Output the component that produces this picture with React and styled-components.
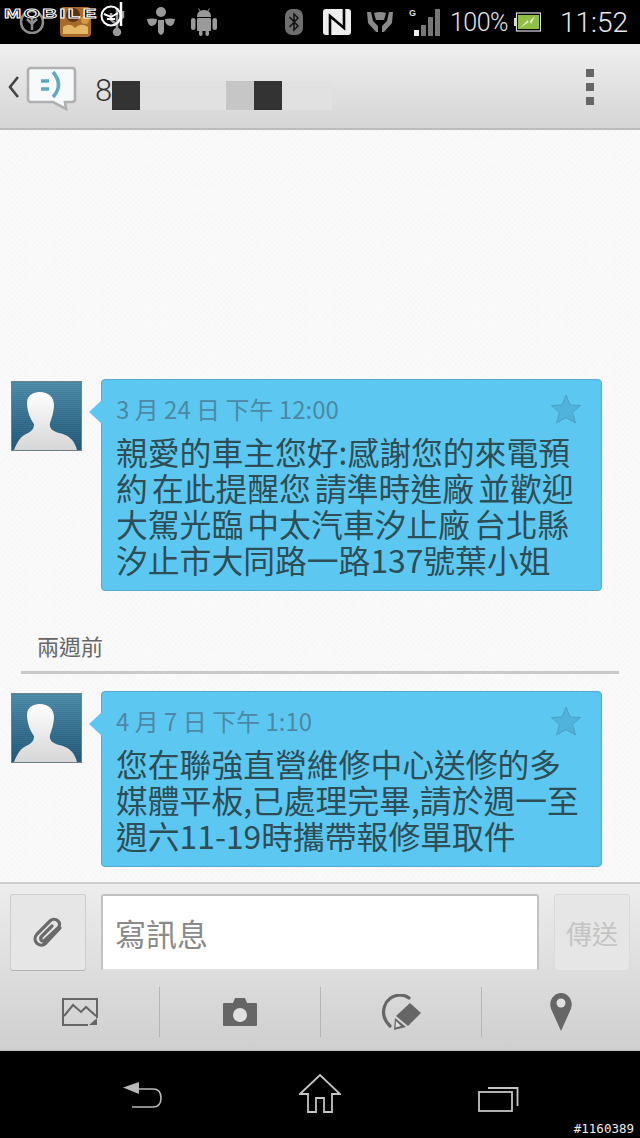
import React from 'react'
import styled, { createGlobalStyle } from 'styled-components'

const CJK = `"Noto Sans CJK TC", "Noto Sans", sans-serif`

const Global = createGlobalStyle`
  html, body { margin: 0; padding: 0; background: #000; }
`

const Phone = styled.div`
  position: relative;
  width: 640px;
  height: 1138px;
  display: flex;
  flex-direction: column;
  overflow: hidden;
  font-family: ${CJK};
`

const StatusBar = styled.div`
  height: 44px;
  flex: none;
  background: #000;
  display: flex;
  align-items: center;
`
const Slot = styled.div`
  flex: none;
  width: ${p => p.$w}px;
  height: 30px;
  margin-left: ${p => p.$ml}px;
  display: flex;
  align-items: center;
  justify-content: center;
`
const Percent = styled.span`
  flex: none;
  margin-left: 9px;
  width: 56px;
  font: 300 25px "Roboto", sans-serif;
  letter-spacing: -0.5px;
  color: #e4e4e4;
  white-space: nowrap;
`
const Clock = styled.span`
  flex: none;
  margin-left: 19px;
  font: 300 28px "Roboto", sans-serif;
  color: #e8e8e8;
`
const Watermark = styled.div`
  position: absolute;
  left: 4px;
  top: 1px;
  display: flex;
  align-items: center;
`
const WatermarkText = styled.span`
  width: 57px;
  margin-right: 38px;
  font: 700 12.5px "Liberation Sans", sans-serif;
  letter-spacing: 1.5px;
  color: #000;
  -webkit-text-stroke: 0.8px #fff;
  transform: scaleX(1.65);
  transform-origin: left center;
`

const Header = styled.header`
  height: 86px;
  flex: none;
  box-sizing: border-box;
  background: linear-gradient(#efefef, #d5d5d5);
  border-bottom: 2px solid #bcbcbc;
  display: flex;
  align-items: center;
  padding: 0 46px 0 8px;
`
const Back = styled.svg`
  margin-top: 2px;
`
const AppIcon = styled.svg`
  margin: 6px 0 0 7px;
`
const Contact = styled.div`
  display: flex;
  align-items: center;
  margin-left: 17px;
  padding-top: 8px;
  flex: 1;
  font-size: 31px;
  color: #333;
  font-family: "Roboto", sans-serif;
  font-weight: 300;
`
const Redacted = styled.div`
  display: flex;
  height: 29px;
  width: 220px;
  margin-top: 11px;
  background: #e1e1e1;
`
const Block = styled.div`
  width: ${p => p.$w}px;
  margin-left: ${p => p.$ml || 0}px;
  background: ${p => p.$c};
`
const Menu = styled.div`
  display: flex;
  flex-direction: column;
  gap: 6px;
  margin-top: 1px;
`
const Dot = styled.i`
  display: block;
  width: 8px;
  height: 8px;
  background: #666;
`

const Messages = styled.main`
  flex: 1;
  min-height: 0;
  display: flex;
  flex-direction: column;
  justify-content: flex-end;
  padding-bottom: 15px;
  background-color: #fafafa;
  background-image: repeating-linear-gradient(45deg, #f7f7f7 0 1px, transparent 1px 4px),
    repeating-linear-gradient(-45deg, #f7f7f7 0 1px, transparent 1px 4px);
`
const Row = styled.div`
  display: flex;
  align-items: flex-start;
  padding-left: 11px;
`
const Avatar = styled.div`
  flex: none;
  box-sizing: border-box;
  width: 71px;
  height: 70px;
  margin: 2px 19px 0 0;
  border: 1px solid #6f8086;
  background: repeating-linear-gradient(rgba(0, 0, 0, 0.07) 0 1px, transparent 1px 2px),
    linear-gradient(#4f8fae, #245c7c);
  overflow: hidden;
`
const Bubble = styled.article`
  position: relative;
  box-sizing: border-box;
  width: 501px;
  padding: 13px 20px 13px 14px;
  background: #5cc8f2;
  border: 1px solid #55a9ca;
  border-radius: 4px;
  &::before {
    content: "";
    position: absolute;
    left: -13px;
    top: 20px;
    width: 13px;
    height: 24px;
    background: #5cc8f2;
    clip-path: polygon(100% 0, 0 50%, 100% 100%);
  }
`
const MetaRow = styled.div`
  display: flex;
  align-items: center;
  justify-content: space-between;
  height: 32px;
  margin-bottom: 8px;
`
const Stamp = styled.time`
  font-size: 24px;
  line-height: 32px;
  color: #4d88a4;
  white-space: pre;
`
const Star = styled.svg`
  width: 30px;
  height: 30px;
`
const Body = styled.p`
  margin: 0;
  font-size: 31.8px;
  line-height: 36px;
  word-spacing: -3px;
  color: #2f4d54;
`
const Line = styled.span`
  display: block;
  white-space: pre;
`
const DayLabel = styled.div`
  margin: 37px 21px 17px;
  padding: 0 0 9px 16px;
  border-bottom: 3px solid #c9c9c9;
  font-size: 22px;
  line-height: 34px;
  color: #666;
`

const Composer = styled.footer`
  height: 169px;
  flex: none;
  box-sizing: border-box;
  background: linear-gradient(#ededed, #cfcfcf);
  border-top: 2px solid #cecece;
  border-bottom: 1px solid #bdbdbd;
  display: flex;
  flex-direction: column;
`
const InputRow = styled.div`
  display: flex;
  gap: 15px;
  box-sizing: border-box;
  padding: 10px 10px 0;
  height: 87px;
`
const SquareButton = styled.button`
  flex: none;
  width: 76px;
  padding: 0;
  border: 1px solid ${p => (p.$muted ? '#dadada' : '#cdcdcd')};
  border-bottom-color: ${p => (p.$muted ? '#dcdcdc' : '#b5b5b5')};
  border-radius: 3px;
  background: #e6e6e6;
  display: flex;
  align-items: center;
  justify-content: center;
  font-family: ${CJK};
  font-size: 26px;
  color: #c4c4c4;
`
const Field = styled.div`
  flex: 1;
  box-sizing: border-box;
  padding-left: 12px;
  border: 2px solid #c2c2c2;
  border-bottom-color: #e0e0e0;
  border-radius: 3px;
  background: #fff;
  display: flex;
  align-items: center;
  font-size: 31px;
  color: #8a8a8a;
`
const Tools = styled.div`
  display: grid;
  grid-template-columns: 160px 161px 161px 158px;
  margin-top: 16px;
  height: 50px;
`
const Tool = styled.div`
  display: flex;
  align-items: center;
  justify-content: center;
  border-right: 1px solid ${p => (p.$last ? 'transparent' : '#b5b5b5')};
`

const NavBar = styled.nav`
  position: relative;
  flex: none;
  height: 87px;
  background: #000;
  display: grid;
  grid-template-columns: 285px 70px 1fr;
  align-items: start;
`
const NavItem = styled.div`
  display: flex;
  justify-content: ${p => p.$align || 'center'};
  padding: ${p => p.$pad};
`
const PhotoId = styled.span`
  position: absolute;
  right: 6px;
  bottom: 2px;
  font: 12.5px "DejaVu Sans Mono", monospace;
  color: #eee;
`

const Person = () => (
  <svg width="69" height="68" viewBox="0 0 69 68">
    <defs>
      <linearGradient id="person" x1="0" y1="0" x2="0" y2="1">
        <stop offset="0" stopColor="#ffffff" />
        <stop offset="1" stopColor="#d6d6d6" />
      </linearGradient>
    </defs>
    <path
      d="M2 68 C5 60 9 54 14 52 C20 49 22 47 22 42 C19 38 15 30 15 21 C15 14 20 10 28 10 C36 10 42 15 42 23 C42 30 39 38 38 41 C37 46 40 49 47 51 C56 53 62 57 65 68 Z"
      fill="url(#person)"
    />
  </svg>
)

const StarIcon = () => (
  <Star viewBox="0 0 30 30">
    <path
      d="M15 1 L19 11 L29.5 11.5 L21.5 18.5 L24.5 29 L15 23.5 L5.5 29 L8.5 18.5 L.5 11.5 L11 11 Z"
      fill="#4fb3dc"
      stroke="#4d9fc3"
      strokeWidth="1"
    />
  </Star>
)

const Message = ({ stamp, lines }) => (
  <Row>
    <Avatar><Person /></Avatar>
    <Bubble>
      <MetaRow>
        <Stamp>{stamp}</Stamp>
        <StarIcon />
      </MetaRow>
      <Body>
        {lines.map((l, i) => <Line key={i}>{l}</Line>)}
      </Body>
    </Bubble>
  </Row>
)

const G = '#8e8e8e'

export default function App() {
  return (
    <Phone>
      <Global />
      <StatusBar>
        <Slot $w={28} $ml={18}>
          <svg width="28" height="24" viewBox="0 0 28 24" fill="none" stroke={G} strokeWidth="2.5">
            <circle cx="14" cy="12" r="11" />
            <path d="M14 8 V20 M9 9 L14 14 L19 9" />
          </svg>
        </Slot>
        <Slot $w={31} $ml={14}>
          <svg width="31" height="30" viewBox="0 0 31 30">
            <rect x="0" y="0" width="31" height="30" rx="4" fill="#a8692c" />
            <circle cx="13" cy="8" r="7" fill="#5a3417" />
            <circle cx="25" cy="13" r="4" fill="#d49a3a" />
            <path d="M3 20 Q10 15 15 21 Q21 15 28 20 L28 27 L3 27 Z" fill="#e4b765" />
          </svg>
        </Slot>
        <Slot $w={18} $ml={17}>
          <svg width="18" height="28" viewBox="0 0 18 28" fill="none" stroke="#9a9a9a" strokeWidth="2.5">
            <path d="M9 0 V24 M3 5 V12 L9 17 M15 3 V9 L9 14" />
            <circle cx="9" cy="24" r="3" fill="#9a9a9a" />
          </svg>
        </Slot>
        <Slot $w={28} $ml={21}>
          <svg width="28" height="30" viewBox="0 0 28 30" fill="#9a9a9a">
            <circle cx="14" cy="5" r="5" />
            <path d="M0 12 Q5 11 10 12 Q10 19 4 19 Q1 18 0 12 Z" />
            <path d="M28 12 Q23 11 18 12 Q18 19 24 19 Q27 18 28 12 Z" />
            <path d="M11 13 H17 V25 Q14 31 11 25 Z" />
          </svg>
        </Slot>
        <Slot $w={26} $ml={16}>
          <svg width="26" height="28" viewBox="0 0 26 28" fill="#9a9a9a">
            <path d="M6 9 Q6 2 13 2 Q20 2 20 9 Z" />
            <rect x="6" y="10" width="14" height="13" rx="1" />
            <rect x="0" y="10" width="4.5" height="12" rx="2.2" />
            <rect x="21.5" y="10" width="4.5" height="12" rx="2.2" />
            <rect x="8" y="22" width="3.5" height="6" rx="1.7" />
            <rect x="14.5" y="22" width="3.5" height="6" rx="1.7" />
            <path d="M9 3 L7.5 0.5 M17 3 L18.5 0.5" stroke="#9a9a9a" strokeWidth="1" />
          </svg>
        </Slot>
        <Slot $w={18} $ml={68}>
          <svg width="18" height="26" viewBox="0 0 18 26">
            <rect width="18" height="26" rx="7" fill="#6e6e6e" />
            <path d="M4.5 8 L13 17 L9 21 V5 L13 9 L4.5 18" fill="none" stroke="#111" strokeWidth="1.5" />
          </svg>
        </Slot>
        <Slot $w={28} $ml={20}>
          <svg width="28" height="26" viewBox="0 0 28 26">
            <rect width="28" height="26" rx="3" fill="#eee" />
            <path d="M7 26 V7 L21 19 V0" fill="none" stroke="#000" strokeWidth="2.6" />
          </svg>
        </Slot>
        <Slot $w={26} $ml={16}>
          <svg width="26" height="22" viewBox="0 0 26 22" fill="#8a8a8a">
            <path d="M0 1 L4 1 L6 10 L11 15 V21 H9 L1 12 Z" />
            <path d="M26 1 L22 1 L20 10 L15 15 V21 H17 L25 12 Z" />
            <path d="M7 2 Q13 0 19 2 L17 9 H9 Z" />
          </svg>
        </Slot>
        <Slot $w={32} $ml={16}>
          <svg width="32" height="28" viewBox="0 0 32 28">
            <text x="0" y="8" fontFamily="Liberation Sans" fontWeight="700" fontSize="9" fill="#ddd">G</text>
            <rect x="5" y="22" width="5" height="6" fill="#eee" />
            <rect x="12" y="17" width="5" height="11" fill="#777" />
            <rect x="19" y="9" width="5" height="19" fill="#777" />
            <rect x="26" y="1" width="5" height="27" fill="#777" />
          </svg>
        </Slot>
        <Percent>100%</Percent>
        <Slot $w={27} $ml={8}>
          <svg width="27" height="20" viewBox="0 0 27 20">
            <rect x="0" y="6" width="2" height="8" fill="#ddd" />
            <rect x="2.5" y="1" width="24" height="18" fill="#000" stroke="#ddd" strokeWidth="1.2" />
            <rect x="4" y="3" width="21" height="14" fill="#8fbf45" />
            <path d="M6 16 L14 8 L14 11 L21 4 L17 12 L16 9 Z" fill="#eef5dc" />
          </svg>
        </Slot>
        <Clock>11:52</Clock>
      </StatusBar>

      <Header>
        <Back width="11" height="22" viewBox="0 0 11 22" fill="none" stroke="#444" strokeWidth="2.6">
          <path d="M10 1 L2 11 L10 21" />
        </Back>
        <AppIcon width="52" height="46" viewBox="0 0 52 46">
          <path
            d="M5 2 H46 Q49 2 49 5 V33 Q49 36 46 36 H39 L40 43 L27 36 H5 Q2 36 2 33 V5 Q2 2 5 2 Z"
            fill="#f6fafa"
            stroke="#b0b0b0"
            strokeWidth="2.6"
          />
          <path d="M15 15 H23 M15 23 H23" stroke="#5da9bf" strokeWidth="3.5" />
          <path d="M27 6 Q38 19 27 31" fill="none" stroke="#5da9bf" strokeWidth="3.5" />
        </AppIcon>
        <Contact>
          8
          <Redacted>
            <Block $w={28} $c="#333" />
            <Block $w={28} $ml={86} $c="#c6c6c6" />
            <Block $w={28} $c="#333" />
          </Redacted>
        </Contact>
        <Menu><Dot /><Dot /><Dot /></Menu>
      </Header>

      <Messages>
        <Message
          stamp="3 月 24 日 下午 12:00"
          lines={[
            '親愛的車主您好:感謝您的來電預',
            '約 在此提醒您 請準時進廠 並歡迎',
            '大駕光臨 中太汽車汐止廠 台北縣',
            '汐止市大同路一路137號葉小姐',
          ]}
        />
        <DayLabel>兩週前</DayLabel>
        <Message
          stamp="4 月 7 日 下午 1:10"
          lines={[
            '您在聯強直營維修中心送修的多',
            '媒體平板,已處理完畢,請於週一至',
            '週六11-19時攜帶報修單取件',
          ]}
        />
      </Messages>

      <Composer>
        <InputRow>
          <SquareButton>
            <svg width="32" height="32" viewBox="0 0 32 32" fill="none" stroke="#6a6a6a" strokeWidth="3.2" strokeLinecap="round">
              <path d="M28 11 L14 26 C8 32 -1 24 5 17 L18 4 C23 -1 31 6 26 11 L13 23 C10 26 7 22 10 19 L20 9" />
            </svg>
          </SquareButton>
          <Field>寫訊息</Field>
          <SquareButton $muted>傳送</SquareButton>
        </InputRow>
        <Tools>
          <Tool>
            <svg width="36" height="28" viewBox="0 0 36 28" fill="none" stroke="#666" strokeWidth="2">
              <path d="M35 20 V1 H1 V27 H26" />
              <path d="M2 18 L11 7 L19 14 L24 9 L34 18" />
              <path d="M27 27 L35 20 V27 Z" fill="#666" stroke="none" />
            </svg>
          </Tool>
          <Tool>
            <svg width="34" height="28" viewBox="0 0 34 28">
              <path d="M1 5 H10 L12 0 H22 L24 5 H33 Q34 5 34 6 V27 Q34 28 33 28 H1 Q0 28 0 27 V6 Q0 5 1 5 Z" fill="#666" />
              <circle cx="17" cy="17" r="7" fill="#e0e0e0" />
            </svg>
          </Tool>
          <Tool>
            <svg width="42" height="36" viewBox="0 0 42 36">
              <path d="M10 32 C-2 20 4 2 20 1 Q25 1 29 4" fill="none" stroke="#666" strokeWidth="3.2" strokeLinecap="round" />
              <path d="M16 22 L30 9 L41 19 L28 32 Z" fill="#666" />
              <path d="M15 24 L26 33 L14 36 Z" fill="#666" />
              <path d="M16 27 L21 32 L15.5 33.5 Z" fill="#e0e0e0" />
            </svg>
          </Tool>
          <Tool $last>
            <svg width="22" height="38" viewBox="0 0 22 38">
              <path d="M11 38 L2 18 C-3 8 4 0 11 0 C18 0 25 8 20 18 Z" fill="#666" />
              <circle cx="11" cy="10" r="4.5" fill="#e0e0e0" />
            </svg>
          </Tool>
        </Tools>
      </Composer>

      <NavBar>
        <NavItem $align="flex-end" $pad="31px 122px 0 0">
          <svg width="40" height="30" viewBox="0 0 40 30" fill="none" stroke="#b8b8b8" strokeWidth="1.6">
            <path d="M14 7 H30 Q38 7 38 16 Q38 25 30 25 H9" />
            <path d="M0 5.5 L16 0 V12 Z" fill="#b8b8b8" stroke="none" />
          </svg>
        </NavItem>
        <NavItem $pad="23px 0 0">
          <svg width="42" height="40" viewBox="0 0 42 40" fill="none" stroke="#c4c4c4" strokeWidth="1.8">
            <path d="M1 20 L21 1 L41 20 H33 V38 H25 V24 H17 V38 H9 V20 Z" />
          </svg>
        </NavItem>
        <NavItem $align="flex-start" $pad="33px 0 0 123px">
          <svg width="41" height="28" viewBox="0 0 41 28" fill="none" stroke="#c4c4c4" strokeWidth="1.8">
            <rect x="1" y="8" width="33" height="19" />
            <path d="M10 4 H39.5 V22" />
          </svg>
        </NavItem>
        <PhotoId>#1160389</PhotoId>
      </NavBar>

      <Watermark>
        <WatermarkText>MOBILE</WatermarkText>
        <svg width="26" height="26" viewBox="0 0 26 26" fill="none" stroke="#fff" strokeWidth="2">
          <circle cx="12" cy="15" r="9.5" />
          <path d="M5 13 L12 16 L19 12 M8 18 H16" />
          <path d="M22 1 V25" strokeWidth="2.5" />
        </svg>
      </Watermark>
    </Phone>
  )
}
